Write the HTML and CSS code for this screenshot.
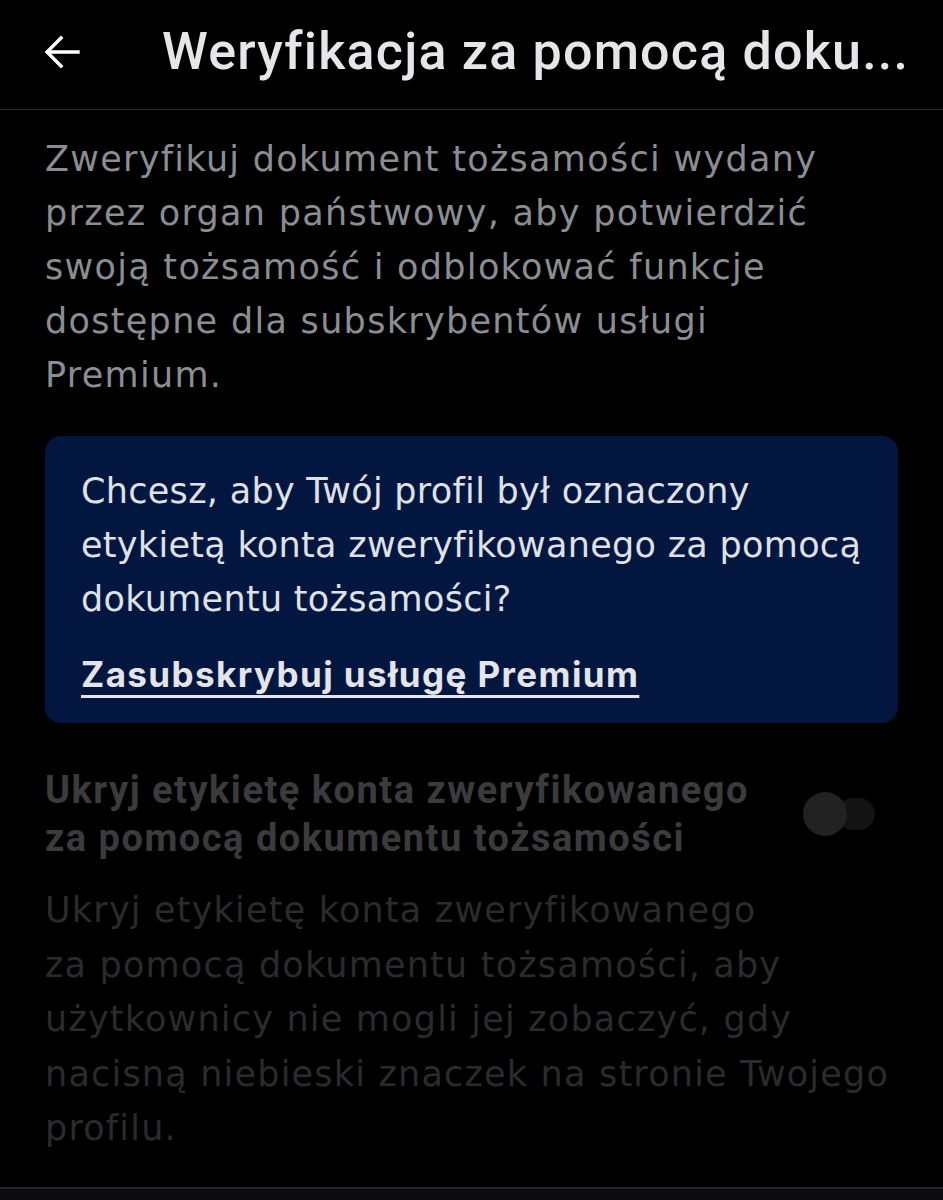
FILE: index.html
```html
<!DOCTYPE html>
<html lang="pl">
<head>
    <meta charset="UTF-8">
    <meta name="viewport" content="width=device-width, initial-scale=1.0">
    <title>Weryfikacja za pomocą dokumentu tożsamości</title>
    <link rel="stylesheet" href="styles.css">
</head>
<body>
    <header class="top-bar">
        <a href="#" class="back-button" aria-label="Wstecz">
            <svg width="40" height="40" viewBox="0 0 40 40">
                <path d="M36 20H6M19 6L5 20l14 14" fill="none" stroke="#fff" stroke-width="3.4" stroke-linecap="square"/>
            </svg>
        </a>
        <h1 class="title">Weryfikacja za pomocą doku...</h1>
    </header>

    <main class="content">
        <p class="intro">Zweryfikuj dokument tożsamości wydany przez organ państwowy, aby potwierdzić swoją tożsamość i odblokować funkcje dostępne dla subskrybentów usługi Premium.</p>

        <div class="premium-box">
            <p>Chcesz, aby Twój profil był oznaczony etykietą konta zweryfikowanego za pomocą dokumentu tożsamości?</p>
            <a href="#" class="premium-link">Zasubskrybuj usługę Premium</a>
        </div>

        <div class="setting disabled">
            <div class="setting-row">
                <h2 class="setting-title">Ukryj etykietę konta zweryfikowanego za&nbsp;pomocą dokumentu tożsamości</h2>
                <span class="toggle"><span class="toggle-thumb"></span></span>
            </div>
            <p class="setting-desc">Ukryj etykietę konta zweryfikowanego za&nbsp;pomocą dokumentu tożsamości, aby użytkownicy nie mogli jej zobaczyć, gdy nacisną niebieski znaczek na stronie Twojego profilu.</p>
        </div>
    </main>

    <footer class="bottom-bar"></footer>
</body>
</html>
```

FILE: styles.css
```css
html, body {
    height: 100%;
}
body {
    font-family: "DejaVu Sans", "Noto Sans", sans-serif;
    margin: 0;
    padding: 0;
    background-color: #000;
    color: #e7e9ea;
    display: flex;
    flex-direction: column;
}
.top-bar {
    display: flex;
    align-items: center;
    height: 110px;
    padding: 0 30px 0 42px;
    border-bottom: 1px solid #2b2d30;
    box-sizing: border-box;
}
.back-button {
    display: flex;
    width: 40px;
    height: 40px;
    margin-top: -6px;
}
.title {
    margin: -6px 0 0 80px;
    font-family: Roboto, sans-serif;
    font-size: 52px;
    font-weight: 500;
    letter-spacing: 1.2px;
    color: #e4e6e8;
    white-space: nowrap;
}
.content {
    flex: 1;
    padding: 22px 45px 0 45px;
}
.intro {
    margin: 0;
    max-width: 810px;
    font-size: 35px;
    line-height: 54px;
    letter-spacing: 1.3px;
    color: #8a8e93;
}
.premium-box {
    margin-top: 34px;
    background-color: #03163f;
    border-radius: 16px;
    padding: 28px 24px 21px 36px;
    color: #dfe1e6;
    font-size: 35px;
    line-height: 54px;
    letter-spacing: 0.3px;
}
.premium-box p {
    margin: 0;
}
.premium-link {
    display: inline-block;
    margin-top: 21px;
    font-family: Inter, "Noto Sans", sans-serif;
    color: #e3e5ea;
    font-weight: 700;
    letter-spacing: 1.4px;
    text-decoration: underline;
    text-decoration-thickness: 3px;
    text-underline-offset: 8px;
}
.setting {
    margin-top: 43px;
}
.setting-row {
    display: flex;
    align-items: center;
    justify-content: space-between;
}
.setting-title {
    margin: 0;
    font-family: Roboto, sans-serif;
    font-size: 38px;
    line-height: 48px;
    font-weight: 700;
    letter-spacing: 1.5px;
    color: #3a3b3c;
}
.toggle {
    position: relative;
    display: block;
    flex-shrink: 0;
    width: 74px;
    height: 46px;
    margin-right: 23px;
}
.toggle::before {
    content: "";
    position: absolute;
    left: 36px;
    top: 7px;
    width: 38px;
    height: 32px;
    border-radius: 16px;
    background-color: #131313;
}
.toggle-thumb {
    position: absolute;
    left: 2px;
    top: 1px;
    width: 44px;
    height: 44px;
    border-radius: 50%;
    background-color: #222;
}
.setting-desc {
    margin: 21px 0 0 0;
    font-size: 35px;
    line-height: 54.5px;
    letter-spacing: 1.2px;
    color: #2a2b2d;
}
.bottom-bar {
    height: 11px;
    background-color: #0b0b10;
    border-top: 2px solid #24252b;
}
```
